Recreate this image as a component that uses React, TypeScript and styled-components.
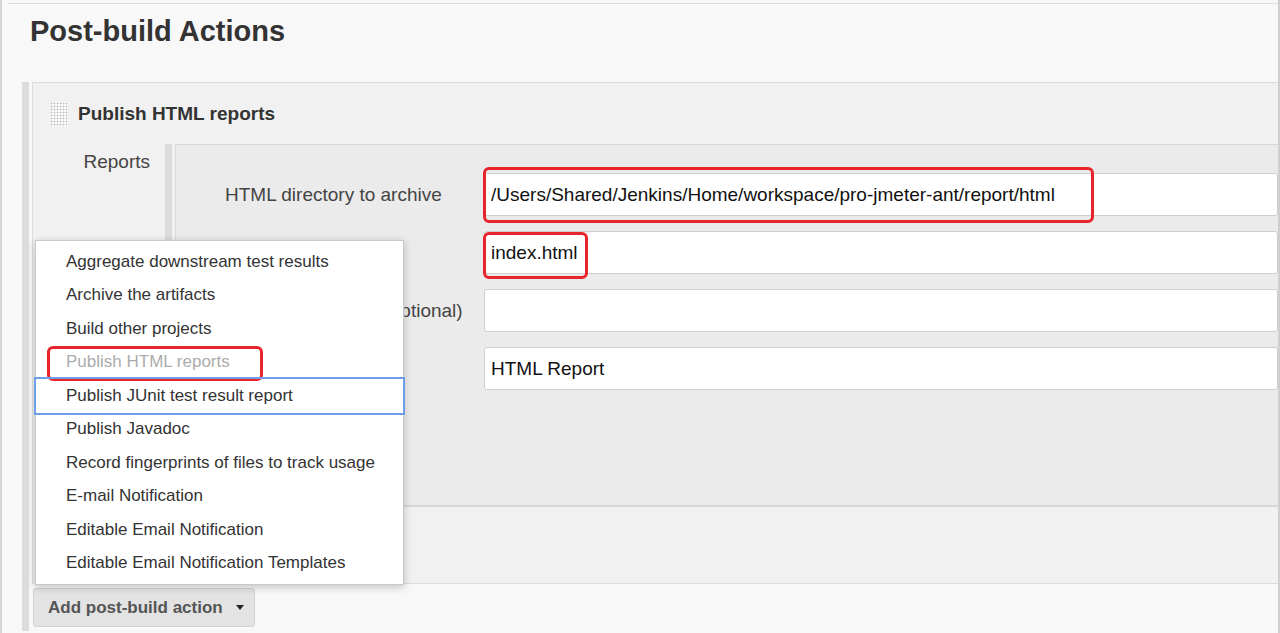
import React from 'react'
import styled, { createGlobalStyle } from 'styled-components'

const GlobalStyle = createGlobalStyle`
  html, body {
    margin: 0;
    padding: 0;
    background: #f8f8f8;
  }
  body {
    font-family: 'Liberation Sans', Arial, Helvetica, sans-serif;
    color: #333;
  }
`

const menuItems = [
  'Aggregate downstream test results',
  'Archive the artifacts',
  'Build other projects',
  'Publish HTML reports',
  'Publish JUnit test result report',
  'Publish Javadoc',
  'Record fingerprints of files to track usage',
  'E-mail Notification',
  'Editable Email Notification',
  'Editable Email Notification Templates',
]

const fields = [
  {
    label: 'HTML directory to archive',
    value: '/Users/Shared/Jenkins/Home/workspace/pro-jmeter-ant/report/html',
    mark: 'path',
  },
  { label: 'Index page[s]', value: 'index.html', mark: 'index' },
  { label: 'Index page title[s] (Optional)', value: '', mark: '' },
  { label: 'Report title', value: 'HTML Report', mark: '' },
]

const App = () => {
  return (
    <Frame>
      <GlobalStyle />
      <Section>
        <Title>Post-build Actions</Title>
        <Repeated>
          <Bar />
          <Column>
            <Panel>
              <PanelHeader>
                <Handle />
                <PanelTitle>Publish HTML reports</PanelTitle>
              </PanelHeader>
              <PanelBody>
                <SideLabel>Reports</SideLabel>
                <Nested>
                  <Bar />
                  <InnerPanel>
                    {fields.map((f) => (
                      <FieldRow key={f.label}>
                        <FieldLabel>{f.label}</FieldLabel>
                        <FieldBox mark={f.mark}>
                          <TextField readOnly defaultValue={f.value} />
                        </FieldBox>
                      </FieldRow>
                    ))}
                  </InnerPanel>
                </Nested>
              </PanelBody>
            </Panel>
            <AddArea>
              <Menu>
                {menuItems.map((item, i) => (
                  <MenuItem
                    key={item}
                    disabled={i === 3}
                    focused={i === 4}
                  >
                    {item}
                  </MenuItem>
                ))}
              </Menu>
              <AddButton type='button'>
                Add post-build action
                <Caret />
              </AddButton>
            </AddArea>
          </Column>
        </Repeated>
      </Section>
    </Frame>
  )
}

const Frame = styled.div`
  box-sizing: border-box;
  width: 1280px;
  height: 633px;
  overflow: hidden;
  border-left: 2px solid #d6d6d6;
  border-right: 2px solid #cfcfcf;
  padding-left: 6px;
  background: #f8f8f8;
`
const Section = styled.div`
  margin-top: 3px;
  border-top: 1px solid #dcdcdc;
  height: 100%;
`
const Title = styled.h1`
  margin: 10px 0 34px 22px;
  font-size: 29px;
  line-height: 34px;
  font-weight: bold;
  color: #333;
`
const Repeated = styled.div`
  display: flex;
  margin-left: 14px;
`
const Bar = styled.div`
  flex: 0 0 7px;
  background: #dcdcdc;
  margin-right: 3px;
`
const Column = styled.div`
  flex: 1;
  min-width: 0;
  padding-bottom: 4px;
`
const Panel = styled.div`
  background: #f1f1f1;
  border-top: 1px solid #dadada;
  border-left: 1px solid #dedede;
  border-bottom: 1px solid #dcdcdc;
  padding-bottom: 76px;
`
const PanelHeader = styled.div`
  display: flex;
  align-items: center;
  gap: 10px;
  padding: 19px 0 0 17px;
  height: 24px;
  margin-bottom: 18px;
`
const Handle = styled.div`
  width: 18px;
  height: 24px;
  background-color: #fafafa;
  background-image: radial-gradient(circle, #b9b9b9 0.8px, transparent 1.1px);
  background-size: 3px 3px;
`
const PanelTitle = styled.div`
  font-size: 19px;
  font-weight: bold;
  color: #333;
`
const PanelBody = styled.div`
  display: flex;
`
const SideLabel = styled.div`
  box-sizing: border-box;
  flex: 0 0 132px;
  padding: 7px 15px 0 0;
  text-align: right;
  font-size: 19px;
  line-height: 22px;
  color: #444;
`
const Nested = styled.div`
  flex: 1;
  display: flex;
  min-width: 0;
`
const InnerPanel = styled.div`
  flex: 1;
  display: flex;
  flex-direction: column;
  gap: 15px;
  background: #ebebeb;
  border-top: 1px solid #d8d8d8;
  border-left: 1px solid #dcdcdc;
  border-bottom: 2px solid #d6d6d6;
  padding: 28px 0 115px 49px;
`
const FieldRow = styled.div`
  display: flex;
  align-items: center;
`
const FieldLabel = styled.div`
  flex: 0 0 259px;
  font-size: 19px;
  white-space: nowrap;
  color: #444;
`
const FieldBox = styled.div<{ mark: string }>`
  position: relative;
  flex: 1;
  display: flex;

  &::after {
    content: '';
    display: ${(p) => (p.mark ? 'block' : 'none')};
    position: absolute;
    box-sizing: border-box;
    border: 3px solid #e8242c;
    border-radius: 6px;
    left: -1px;
    top: ${(p) => (p.mark === 'path' ? '-6px' : '1px')};
    width: ${(p) => (p.mark === 'path' ? '611px' : '105px')};
    height: ${(p) => (p.mark === 'path' ? '56px' : '47px')};
    pointer-events: none;
  }
`
const TextField = styled.input`
  flex: 1;
  box-sizing: border-box;
  height: 43px;
  border: 1px solid #cfcfcf;
  border-radius: 3px;
  background: #fff;
  padding: 0 6px;
  font-family: 'Liberation Sans', Arial, Helvetica, sans-serif;
  font-size: 19px;
  color: #111;
  outline: none;
`
const AddArea = styled.div`
  position: relative;
  margin: 4px 0 0 1px;
`
const Menu = styled.div`
  position: absolute;
  left: 2px;
  bottom: calc(100% + 3px);
  z-index: 10;
  box-sizing: border-box;
  width: 369px;
  padding: 4px 0;
  background: #fff;
  border: 1px solid #c9c9c9;
  box-shadow: 0 2px 8px rgba(0, 0, 0, 0.22);
`
const MenuItem = styled.div<{ disabled?: boolean; focused?: boolean }>`
  position: relative;
  height: 33.5px;
  display: flex;
  align-items: center;
  padding-left: 30px;
  font-size: 17px;
  white-space: nowrap;
  color: ${(p) => (p.disabled ? '#acacac' : '#333')};
  outline: ${(p) => (p.focused ? '2px solid #6d9eea' : 'none')};

  &::after {
    content: '';
    display: ${(p) => (p.disabled ? 'block' : 'none')};
    position: absolute;
    box-sizing: border-box;
    left: 11px;
    top: 0;
    width: 216px;
    height: 35px;
    border: 3px solid #e8242c;
    border-radius: 6px;
  }
`
const AddButton = styled.button`
  display: inline-flex;
  align-items: center;
  gap: 13px;
  box-sizing: border-box;
  width: 222px;
  height: 39px;
  padding: 0 0 0 14px;
  background: #e3e3e3;
  border: 1px solid #d2d2d2;
  border-radius: 3px;
  font-family: 'Liberation Sans', Arial, Helvetica, sans-serif;
  font-size: 17px;
  font-weight: bold;
  color: #555;
`
const Caret = styled.span`
  width: 0;
  height: 0;
  border-left: 4px solid transparent;
  border-right: 4px solid transparent;
  border-top: 5px solid #222;
`

export default App
